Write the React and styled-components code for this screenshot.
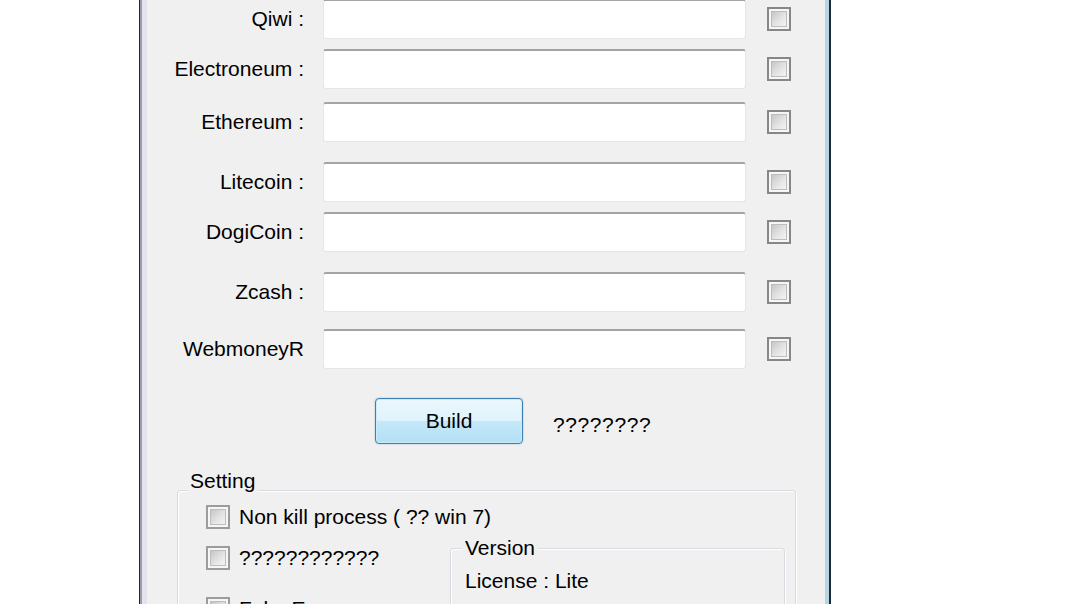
import React from 'react'
import styled, { createGlobalStyle } from 'styled-components'

const GlobalStyle = createGlobalStyle`
  html, body {
    margin: 0;
    padding: 0;
    background: #ffffff;
    overflow: hidden;
  }
  body {
    font-family: "Liberation Sans", Arial, sans-serif;
    font-size: 21px;
    color: #000;
  }
`

const Window = styled.div`
  margin-left: 139px;
  width: 692px;
  height: 660px;
  box-sizing: border-box;
  border-left: 1px solid #242424;
  border-right: 2px solid #1c2a36;
  padding: 0 4px 0 7px;
  background: linear-gradient(
    to right,
    #9c9caa 0 2px,
    #e3e3ee 2px calc(100% - 4px),
    #b7d5e5 calc(100% - 4px)
  );
`

const Client = styled.div`
  height: 100%;
  background: #f0f0f0;
  display: flex;
  flex-direction: column;
`

const FieldRow = styled.div`
  display: grid;
  grid-template-columns: 157px 423px 24px;
  column-gap: 19px;
  align-items: center;
  margin-top: ${p => p.$top}px;
`

const Label = styled.div`
  text-align: right;
  white-space: nowrap;
  line-height: 24px;
`

const TextBox = styled.div`
  height: 40px;
  box-sizing: border-box;
  background: #fff;
  border-radius: 3px;
  border: 1px solid #e4e6ea;
  border-top: 2px solid #a4a4a4;
`

const Check = styled.span`
  display: inline-block;
  width: 24px;
  height: 24px;
  box-sizing: border-box;
  border: 2px solid ${p => (p.$soft ? '#9c9c9c' : '#878787')};
  padding: 2px;
  background: #f6f6f6;
  flex: none;
  &::after {
    content: '';
    display: block;
    width: 100%;
    height: 100%;
    box-sizing: border-box;
    border: 1px solid #bdbdbd;
    background: linear-gradient(135deg, #c6c6c6, #e6e6e6 60%, #f3f3f3);
  }
`

const RowCheck = styled(Check)`
  margin-left: 2px;
`

const BuildRow = styled.div`
  display: flex;
  align-items: center;
  margin-top: 29px;
  padding-left: 228px;
`

const BuildButton = styled.button`
  width: 148px;
  height: 46px;
  border: 1px solid #3c7fb1;
  border-radius: 4px;
  box-shadow: inset 0 0 0 1px #c7ecfb, 0 0 2px rgba(60, 127, 177, 0.4);
  background: linear-gradient(#ebf7fd 0%, #dff3fc 50%, #c4e8f8 50%, #b3e0f5 100%);
  font-family: "Liberation Sans", Arial, sans-serif;
  font-size: 21px;
  color: #000;
  padding: 0;
`

const Status = styled.span`
  margin-left: 30px;
  margin-top: 8px;
  line-height: 24px;
  letter-spacing: 0.6px;
`

const Group = styled.div`
  position: relative;
  box-sizing: border-box;
  border: 1px solid #d5dbe0;
  border-radius: 3px;
  box-shadow: inset 1px 1px 0 #fff, 1px 1px 0 #fff;
`

const SettingGroup = styled(Group)`
  margin: 46px 0 0 30px;
  width: 619px;
  height: 200px;
  padding: 14px 9px 0 28px;
`

const VersionGroup = styled(Group)`
  margin-top: 2px;
  height: 90px;
  padding: 20px 0 0 14px;
`

const Caption = styled.span`
  position: absolute;
  top: ${p => p.$top}px;
  left: ${p => p.$left}px;
  padding: 0 3px;
  line-height: 22px;
  background: #f0f0f0;
`

const CheckRow = styled.label`
  display: flex;
  align-items: center;
  gap: 9px;
  line-height: 24px;
  white-space: nowrap;
  margin-top: ${p => p.$top || 0}px;
`

const Lower = styled.div`
  display: grid;
  grid-template-columns: 244px 335px;
  margin-top: 17px;
  align-items: start;
`

const Column = styled.div`
  display: flex;
  flex-direction: column;
`

const Line = styled.div`
  line-height: 24px;
`

const wallets = [
  { name: 'Qiwi :', top: -1 },
  { name: 'Electroneum :', top: 10 },
  { name: 'Ethereum :', top: 13 },
  { name: 'Litecoin :', top: 20 },
  { name: 'DogiCoin :', top: 10 },
  { name: 'Zcash :', top: 20 },
  { name: 'WebmoneyR', top: 17 },
]

export default function App() {
  return (
    <>
      <GlobalStyle />
      <Window>
        <Client>
          {wallets.map(w => (
            <FieldRow key={w.name} $top={w.top}>
              <Label>{w.name}</Label>
              <TextBox />
              <RowCheck />
            </FieldRow>
          ))}

          <BuildRow>
            <BuildButton>Build</BuildButton>
            <Status>????????</Status>
          </BuildRow>

          <SettingGroup>
            <Caption $top={-21} $left={9}>Setting</Caption>
            <CheckRow>
              <Check $soft />
              Non kill process ( ?? win 7)
            </CheckRow>
            <Lower>
              <Column>
                <CheckRow>
                  <Check $soft />
                  ????????????
                </CheckRow>
                <CheckRow $top={27}>
                  <Check $soft />
                  Fake Error
                </CheckRow>
              </Column>
              <VersionGroup>
                <Caption $top={-12} $left={11}>Version</Caption>
                <Line>License : Lite</Line>
              </VersionGroup>
            </Lower>
          </SettingGroup>
        </Client>
      </Window>
    </>
  )
}
